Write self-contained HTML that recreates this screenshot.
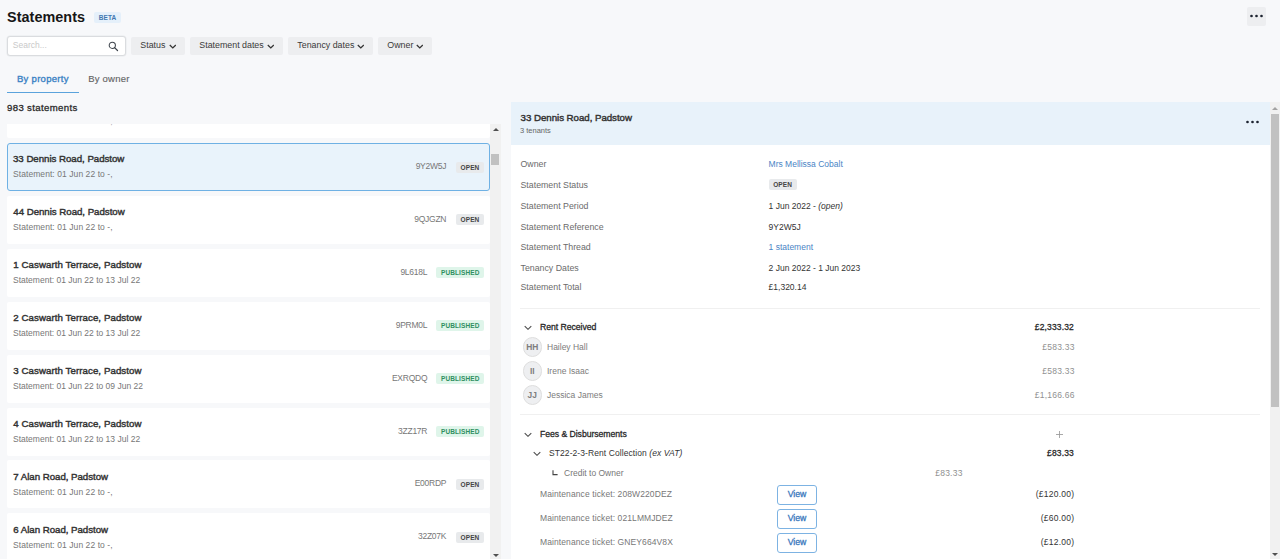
<!DOCTYPE html>
<html lang="en">
<head>
<meta charset="utf-8">
<title>Statements</title>
<style>
*{box-sizing:border-box;margin:0;padding:0}
html,body{width:1280px;height:559px;overflow:hidden;background:#f7f8fa;font-family:"Liberation Sans",sans-serif;color:#2d2d2d;font-size:9px}
.abs{position:absolute}
#page{position:relative;width:1280px;height:559px;overflow:hidden}
h1{position:absolute;left:7px;top:7px;font-size:14.4px;line-height:20px;font-weight:bold;color:#161616;letter-spacing:0.05px}
.beta{position:absolute;left:94px;top:12px;width:27px;height:11px;background:#e5f0fa;border-radius:2px;color:#4277b0;font-size:6.5px;font-weight:bold;line-height:11px;text-align:center;letter-spacing:0.1px}
.search{position:absolute;left:6.5px;top:36.4px;width:119.4px;height:19.3px;background:#fff;border:1px solid #dadcdf;border-radius:3px;box-shadow:0 0 0 0.5px #e8eaec}
.search span{position:absolute;left:5.3px;top:0;line-height:16.6px;font-size:8.5px;color:#c9c9c9}
.search svg{position:absolute;left:100.8px;top:3.2px}
.fbtn{position:absolute;top:37px;height:18.3px;background:#edeef0;border-radius:2px;font-size:8.85px;line-height:17px;color:#3a3a3a;padding-left:9.3px;white-space:nowrap}
.fbtn svg{position:absolute;right:8.6px;top:6.6px}
.tab{position:absolute;top:71px;font-size:9.5px;line-height:16px;white-space:nowrap}
.count{position:absolute;left:7px;top:101px;font-size:9.6px;line-height:14px;color:#2a2a2a;letter-spacing:0.36px;-webkit-text-stroke:0.3px #2a2a2a}
.moreTop{position:absolute;left:1247px;top:6.5px;width:19px;height:19.5px;background:#edeef0;border-radius:2px}
.dots{position:absolute;display:flex;gap:2.3px}
.dots i{display:block;width:2.6px;height:2.6px;background:#1d2430;border-radius:50%}

/* left list */
#list{position:absolute;left:7px;top:123.5px;width:483px;height:436px;overflow:hidden}
.card{position:absolute;left:0;width:483px;height:48px;background:#fff;border-radius:2px}
.card.sel{background:#e9f3fb;border:1px solid #6fb1e4;border-radius:3px;height:48.1px}
.card .t{position:absolute;left:6.3px;top:9.4px;font-size:9.7px;line-height:14px;color:#333;white-space:nowrap;letter-spacing:-0.03px;-webkit-text-stroke:0.42px #333}
.card .s{position:absolute;left:6px;top:25.4px;font-size:8.5px;line-height:13px;color:#777;white-space:nowrap;letter-spacing:0.07px}
.card .code{position:absolute;top:17px;font-size:8.5px;line-height:13px;color:#777;white-space:nowrap;text-align:right;letter-spacing:-0.25px;margin-right:-0.25px}
.badge{position:absolute;height:11px;border-radius:2px;font-size:6.5px;font-weight:bold;line-height:11px;text-align:center;letter-spacing:0.1px}
.badge.open{background:#e8eaec;color:#444;width:28px}
.badge.pub{background:#dff5ea;color:#2f8f61;width:47.6px}
.card.sel .t,.card.sel .s{left:5px}
.card.sel .t{top:8.6px}.card.sel .s{top:24.0px}.card.sel .code{top:16.6px}

.sbL{position:absolute;left:490px;top:123.5px;width:11px;height:436px;background:#f1f1f1}
.sbR{position:absolute;left:1269.5px;top:102px;width:10.5px;height:457px;background:#f1f1f1}
.thumb{position:absolute;background:#c1c1c1}
.arr{position:absolute;width:0;height:0;border-left:3px solid transparent;border-right:3px solid transparent}
.arr.up{border-bottom:3px solid #505050}
.arr.dn{border-top:3px solid #505050}

/* right panel */
#panel{position:absolute;left:511px;top:102px;width:759px;height:457px;background:#fff;overflow:hidden}
#phead{position:absolute;left:0;top:0;width:759px;height:42.5px;background:#e8f2fa}
#phead .t{position:absolute;left:9.6px;top:9px;font-size:9.7px;line-height:14px;color:#333;letter-spacing:-0.03px;-webkit-text-stroke:0.42px #333}
#phead .s{position:absolute;left:9px;top:24px;font-size:7.5px;line-height:10px;color:#666}
.lbl{position:absolute;left:9.5px;font-size:8.8px;line-height:13px;color:#6b6b6b;white-space:nowrap}
.val{position:absolute;left:257.6px;font-size:8.5px;line-height:13px;color:#333;white-space:nowrap}
.val.link{color:#4a84c5}
.hr{position:absolute;left:9px;width:739.5px;height:1px;background:#f0f0f0}
.sect{position:absolute;font-size:8.7px;line-height:13px;color:#262626;white-space:nowrap;letter-spacing:-0.06px;-webkit-text-stroke:0.27px #262626;margin-top:0.4px}
.amt{position:absolute;width:120px;text-align:right;font-size:8.5px;line-height:13px;white-space:nowrap}
.amt.b{color:#262626;-webkit-text-stroke:0.26px #262626;letter-spacing:0.15px;margin-top:0.4px}
.amt.g{color:#909090;letter-spacing:0.22px;margin-left:0.6px}
.amt.d{color:#333;letter-spacing:0.25px;margin-left:0.4px}
.av{position:absolute;left:11.5px;width:19.7px;height:19.7px;border-radius:50%;background:#eeeff1;border:1px solid #dedede;font-size:8.4px;font-weight:bold;color:#7d7d7d;text-align:center;line-height:18.2px;margin-top:-0.3px;letter-spacing:0.1px}
.nm{position:absolute;left:36px;font-size:8.5px;line-height:13px;color:#7c7c7c;white-space:nowrap}
.row{position:absolute;font-size:8.5px;line-height:13px;white-space:nowrap}
.view{position:absolute;left:266px;width:40px;height:19.5px;border:1px solid #7db3e3;border-radius:3px;background:#fff;color:#3a78bd;font-size:8.7px;line-height:17.5px;text-align:center;-webkit-text-stroke:0.3px #3a78bd}
</style>
</head>
<body>
<div id="page">
  <h1>Statements</h1>
  <div class="beta">BETA</div>
  <div class="moreTop"><svg class="abs" style="left:3.0px;top:7.4px" width="13" height="4" viewBox="0 0 13 4"><circle cx="1.5" cy="2" r="1.35" fill="#1d2430"/><circle cx="6.5" cy="2" r="1.35" fill="#1d2430"/><circle cx="11.5" cy="2" r="1.35" fill="#1d2430"/></svg></div>

  <div class="search"><span>Search...</span>
    <svg width="11" height="11" viewBox="0 0 11 11"><circle cx="4.3" cy="4.3" r="3.1" fill="none" stroke="#3d434b" stroke-width="1.05"/><path d="M6.6 6.6 L9.5 9.5" stroke="#3d434b" stroke-width="1.25" stroke-linecap="round"/></svg>
  </div>
  <div class="fbtn" style="left:131px;width:54px">Status<svg width="7.6" height="5.4" viewBox="0 0 7 5"><path d="M0.7 0.9 L3.5 3.7 L6.3 0.9" fill="none" stroke="#333" stroke-width="1.15"/></svg></div>
  <div class="fbtn" style="left:190px;width:93px">Statement dates<svg width="7.6" height="5.4" viewBox="0 0 7 5"><path d="M0.7 0.9 L3.5 3.7 L6.3 0.9" fill="none" stroke="#333" stroke-width="1.15"/></svg></div>
  <div class="fbtn" style="left:288px;width:85px">Tenancy dates<svg width="7.6" height="5.4" viewBox="0 0 7 5"><path d="M0.7 0.9 L3.5 3.7 L6.3 0.9" fill="none" stroke="#333" stroke-width="1.15"/></svg></div>
  <div class="fbtn" style="left:378px;width:54px">Owner<svg width="7.6" height="5.4" viewBox="0 0 7 5"><path d="M0.7 0.9 L3.5 3.7 L6.3 0.9" fill="none" stroke="#333" stroke-width="1.15"/></svg></div>

  <div class="tab" style="left:17px;color:#3b82c4;letter-spacing:0.28px;-webkit-text-stroke:0.35px #3b82c4">By property</div>
  <div class="abs" style="left:7px;top:92px;width:72px;height:1px;background:#5aa3dc"></div>
  <div class="tab" style="left:88.3px;color:#666;letter-spacing:0.2px;-webkit-text-stroke:0.15px #666">By owner</div>

  <div class="count">983 statements</div>

  <div id="list">
    <div class="card" style="top:-33.5px"><div class="s">Statement: 01 Jun 22 to -,</div></div>
    <div class="card sel" style="top:19.2px"><div class="t">33 Dennis Road, Padstow</div><div class="s">Statement: 01 Jun 22 to -,</div><div class="code" style="right:43px">9Y2W5J</div><div class="badge open" style="right:5px;top:18px">OPEN</div></div>
    <div class="card" style="top:72.40px"><div class="t">44 Dennis Road, Padstow</div><div class="s">Statement: 01 Jun 22 to -,</div><div class="code" style="right:44px">9QJGZN</div><div class="badge open" style="right:6px;top:18.6px">OPEN</div></div>
    <div class="card" style="top:125.30px"><div class="t" style="letter-spacing:0.07px">1 Caswarth Terrace, Padstow</div><div class="s" style="letter-spacing:0px">Statement: 01 Jun 22 to 13 Jul 22</div><div class="code" style="right:63px">9L618L</div><div class="badge pub" style="right:6px;top:18.6px">PUBLISHED</div></div>
    <div class="card" style="top:178.20px"><div class="t" style="letter-spacing:0.07px">2 Caswarth Terrace, Padstow</div><div class="s" style="letter-spacing:0px">Statement: 01 Jun 22 to 13 Jul 22</div><div class="code" style="right:63px">9PRM0L</div><div class="badge pub" style="right:6px;top:18.6px">PUBLISHED</div></div>
    <div class="card" style="top:231.10px"><div class="t" style="letter-spacing:0.07px">3 Caswarth Terrace, Padstow</div><div class="s" style="letter-spacing:0px">Statement: 01 Jun 22 to 09 Jun 22</div><div class="code" style="right:63px">EXRQDQ</div><div class="badge pub" style="right:6px;top:18.6px">PUBLISHED</div></div>
    <div class="card" style="top:284.00px"><div class="t" style="letter-spacing:0.07px">4 Caswarth Terrace, Padstow</div><div class="s" style="letter-spacing:0px">Statement: 01 Jun 22 to 13 Jul 22</div><div class="code" style="right:63px">3ZZ17R</div><div class="badge pub" style="right:6px;top:18.6px">PUBLISHED</div></div>
    <div class="card" style="top:336.90px"><div class="t">7 Alan Road, Padstow</div><div class="s">Statement: 01 Jun 22 to -,</div><div class="code" style="right:44px">E00RDP</div><div class="badge open" style="right:6px;top:18.6px">OPEN</div></div>
    <div class="card" style="top:389.80px"><div class="t">6 Alan Road, Padstow</div><div class="s">Statement: 01 Jun 22 to -,</div><div class="code" style="right:44px">32Z07K</div><div class="badge open" style="right:6px;top:18.6px">OPEN</div></div>
  </div>
  <div class="sbL">
    <div class="arr up" style="left:2.5px;top:4.2px"></div>
    <div class="thumb" style="left:1.2px;top:30.5px;width:8px;height:10.9px"></div>
    <div class="arr dn" style="left:2.5px;top:430px"></div>
  </div>

  <div id="panel">
    <div id="phead"><div class="t">33 Dennis Road, Padstow</div><div class="s">3 tenants</div>
      <svg class="abs" style="left:735.1px;top:17.5px" width="13" height="4" viewBox="0 0 13 4"><circle cx="1.5" cy="2" r="1.35" fill="#1d2430"/><circle cx="6.5" cy="2" r="1.35" fill="#1d2430"/><circle cx="11.5" cy="2" r="1.35" fill="#1d2430"/></svg>
    </div>
    <div class="lbl" style="top:56px">Owner</div><div class="val link" style="top:56px">Mrs Mellissa Cobalt</div>
    <div class="lbl" style="top:77px">Statement Status</div><div class="badge open" style="left:257.6px;top:77.4px">OPEN</div>
    <div class="lbl" style="top:98px">Statement Period</div><div class="val" style="top:98px">1 Jun 2022 - <i>(open)</i></div>
    <div class="lbl" style="top:119px">Statement Reference</div><div class="val" style="top:119px">9Y2W5J</div>
    <div class="lbl" style="top:139px">Statement Thread</div><div class="val link" style="top:139px">1 statement</div>
    <div class="lbl" style="top:160px">Tenancy Dates</div><div class="val" style="top:160px">2 Jun 2022 - 1 Jun 2023</div>
    <div class="lbl" style="top:179px">Statement Total</div><div class="val" style="top:179px">£1,320.14</div>
    <div class="hr" style="top:206px"></div>

    <svg class="abs" style="left:12.6px;top:222.8px" width="8" height="5.7" viewBox="0 0 7 5"><path d="M0.6 0.9 L3.5 3.8 L6.4 0.9" fill="none" stroke="#484848" stroke-width="0.9"/></svg>
    <div class="sect" style="left:29px;top:219px">Rent Received</div><div class="amt b" style="left:443px;top:219px">£2,333.32</div>
    <div class="av" style="top:235.5px">HH</div><div class="nm" style="top:239px">Hailey Hall</div><div class="amt g" style="left:443px;top:239px">£583.33</div>
    <div class="av" style="top:259.5px">II</div><div class="nm" style="top:263px">Irene Isaac</div><div class="amt g" style="left:443px;top:263px">£583.33</div>
    <div class="av" style="top:283.5px">JJ</div><div class="nm" style="top:287px">Jessica James</div><div class="amt g" style="left:443px;top:287px">£1,166.66</div>
    <div class="hr" style="top:312px"></div>

    <svg class="abs" style="left:12.6px;top:329.8px" width="8" height="5.7" viewBox="0 0 7 5"><path d="M0.6 0.9 L3.5 3.8 L6.4 0.9" fill="none" stroke="#484848" stroke-width="0.9"/></svg>
    <div class="sect" style="left:29px;top:326px">Fees &amp; Disbursements</div>
    <svg class="abs" style="left:544px;top:328px" width="9" height="9" viewBox="0 0 9 9"><path d="M4.5 1 V8 M1 4.5 H8" stroke="#9a9a9a" stroke-width="0.85" fill="none"/></svg>
    <svg class="abs" style="left:22.3px;top:348.8px" width="8" height="5.7" viewBox="0 0 7 5"><path d="M0.6 0.9 L3.5 3.8 L6.4 0.9" fill="none" stroke="#484848" stroke-width="0.9"/></svg>
    <div class="row" style="left:38px;top:345px;color:#333;letter-spacing:0.08px">ST22-2-3-Rent Collection <i>(ex VAT)</i></div><div class="amt b" style="left:443px;top:345px">£83.33</div>
    <svg class="abs" style="left:41px;top:368px" width="6" height="6" viewBox="0 0 6 6"><path d="M1 0.3 V4.6 H5.6" stroke="#444" stroke-width="1.1" fill="none"/></svg>
    <div class="row" style="left:53px;top:365px;color:#777">Credit to Owner</div><div class="amt g" style="left:331px;top:365px">£83.33</div>
    <div class="row" style="left:29px;top:386px;color:#777;letter-spacing:0.1px">Maintenance ticket: 208W220DEZ</div><div class="view" style="top:383.2px">View</div><div class="amt d" style="left:443px;top:386px">(£120.00)</div>
    <div class="row" style="left:29px;top:410px;color:#777;letter-spacing:0.1px">Maintenance ticket: 021LMMJDEZ</div><div class="view" style="top:407.2px">View</div><div class="amt d" style="left:443px;top:410px">(£60.00)</div>
    <div class="row" style="left:29px;top:434px;color:#777;letter-spacing:0.1px">Maintenance ticket: GNEY664V8X</div><div class="view" style="top:431.2px">View</div><div class="amt d" style="left:443px;top:434px">(£12.00)</div>
  </div>
  <div class="sbR">
    <div class="arr up" style="left:2.5px;top:5px;border-bottom-color:#a3a3a3"></div>
    <div class="thumb" style="left:1.3px;top:11.8px;width:8.7px;height:293.3px"></div>
    <div class="arr dn" style="left:2.5px;top:451px"></div>
  </div>
</div>
</body>
</html>
